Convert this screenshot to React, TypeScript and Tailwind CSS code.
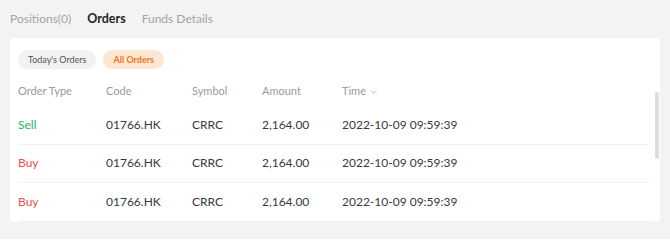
import { ChevronDown } from 'lucide-react';

const tabs = [
  { label: 'Positions(0)', active: false },
  { label: 'Orders', active: true },
  { label: 'Funds Details', active: false },
];

const orders = [
  { type: 'Sell', code: '01766.HK', symbol: 'CRRC', amount: '2,164.00', time: '2022-10-09 09:59:39' },
  { type: 'Buy', code: '01766.HK', symbol: 'CRRC', amount: '2,164.00', time: '2022-10-09 09:59:39' },
  { type: 'Buy', code: '01766.HK', symbol: 'CRRC', amount: '2,164.00', time: '2022-10-09 09:59:39' },
];

export default function App() {
  return (
    <div className="w-[670px] h-[239px] bg-[#f3f3f3] px-[10px] pt-[9px] font-['Lato',sans-serif] overflow-hidden">
      <div className="flex gap-[16px] h-[20px] items-center text-[12px]">
        {tabs.map(tab => (
          <span
            key={tab.label}
            className={tab.active ? 'font-bold text-[#1f1f1f] text-[12.5px]' : 'text-[#a3a3a3]'}
          >
            {tab.label}
          </span>
        ))}
      </div>

      <div className="relative mt-[9px] w-[650px] h-[184px] bg-white rounded-[4px] pl-[8px] pr-[5px] pt-[12px]">
        <div className="flex gap-[7px]">
          <button className="h-[19px] px-[10px] rounded-full bg-[#f2f2f2] text-[9px] text-[#555]">
            Today's Orders
          </button>
          <button className="h-[19px] px-[10px] rounded-full bg-[#fde6d2] text-[9px] font-bold text-[#f5761a]">
            All Orders
          </button>
        </div>

        <div className="grid grid-cols-[88px_86px_70px_80px_1fr] h-[29px] items-center text-[11px] text-[#9a9a9a] mt-[8px]">
          <span>Order Type</span>
          <span>Code</span>
          <span>Symbol</span>
          <span>Amount</span>
          <span className="flex items-center gap-[3px]">
            Time <ChevronDown size={10} strokeWidth={1.5} />
          </span>
        </div>

        <div className="pr-[5px]">
          {orders.map((o, i) => (
            <div
              key={i}
              className="grid grid-cols-[88px_86px_70px_80px_1fr] h-[38.5px] items-center text-[12px] text-[#333a45] border-b border-[#f1f1f1]"
            >
              <span className={o.type === 'Sell' ? 'text-[#2bb55a]' : 'text-[#f04c4c]'}>{o.type}</span>
              <span>{o.code}</span>
              <span>{o.symbol}</span>
              <span>{o.amount}</span>
              <span>{o.time}</span>
            </div>
          ))}
        </div>

        <div className="absolute right-[1px] top-[54px] w-[4px] h-[67px] rounded-full bg-[#dedede]" />
      </div>
    </div>
  );
}
